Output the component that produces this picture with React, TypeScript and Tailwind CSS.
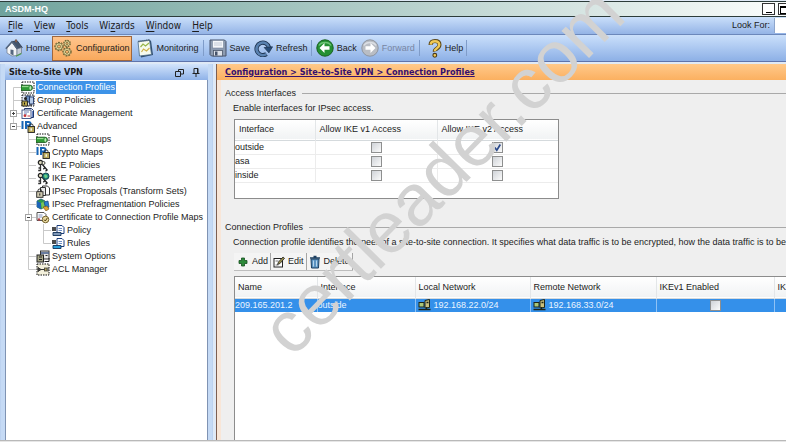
import React, { ReactNode } from "react";

type Guide = "none" | "line" | "tee" | "elbow" | "first" | "plus" | "minus";

interface TreeItem {
  label: string;
  icon: ReactNode;
  guides: Guide[];
  selected?: boolean;
}

/* ---------- tree icons ---------- */

const TunnelIcon = () => (
  <svg viewBox="0 0 14 13" className="h-[13px] w-[14px] shrink-0">
    <rect x="1" y="1" width="12" height="11" fill="#fff" stroke="#111" strokeDasharray="1.5 1" />
    <path d="M0 4.2h9q2.5 0 2.5 2.6T9 9.5H0z" fill="#2f9a35" stroke="#17521b" strokeWidth=".8" />
    <path d="M1 5.6h6.5" stroke="#a5e29a" />
    <ellipse cx="9.4" cy="6.9" rx="1" ry="1.9" fill="#bfe8b8" />
  </svg>
);

const GroupIcon = () => (
  <svg viewBox="0 0 14 13" className="h-[13px] w-[14px] shrink-0">
    <rect x="1" y="1" width="12" height="11" fill="#dfe6f2" stroke="#111" strokeDasharray="1.5 1" />
    <path d="M5 2h4v6H5z" fill="#6d8fc0" stroke="#1a2d57" strokeWidth=".8" />
    <path d="M8.5 3h4v7h-4z" fill="#b8cdea" stroke="#1f3668" strokeWidth=".9" />
    <circle cx="4.5" cy="4.5" r="1.5" fill="#222" />
    <rect x="1" y="7" width="5.5" height="5" fill="#b9a84c" stroke="#222" strokeWidth=".9" />
    <path d="M3.5 8.5v2M8 11h3" stroke="#111" />
  </svg>
);

const CertIcon = () => (
  <svg viewBox="0 0 14 13" className="h-[13px] w-[14px] shrink-0">
    <path d="M3.5 1.5h7l2 2v7h-9z" fill="#f4f7ff" stroke="#22386b" />
    <rect x="1" y="3" width="9" height="8.5" fill="#fff" stroke="#394d82" strokeWidth=".9" />
    <path d="M3 5h5M3 7h3" stroke="#6b7fb8" />
    <circle cx="4" cy="8.7" r="1.4" fill="#c7343a" />
    <path d="M6.5 9h2.5" stroke="#c7343a" />
    <path d="M11.5 4v6" stroke="#6a86c6" />
  </svg>
);

const IpIcon = () => (
  <svg viewBox="0 0 14 13" className="h-[13px] w-[14px] shrink-0">
    <path d="M1.5 1v8M5 9V2h2.5q2 0 2 1.8T7.5 5.6H5" fill="none" stroke="#1765b5" strokeWidth="2" />
    <path d="M8.5 7V5.5q0-1.5 1.8-1.5T12 5.5V7" fill="none" stroke="#333" />
    <rect x="7" y="6.5" width="6.5" height="6" fill="#b9a95a" stroke="#222" strokeWidth=".9" />
    <path d="M10.2 8.3v2.4" stroke="#fff" strokeWidth="1.3" />
  </svg>
);

const KeysIcon = ({ globe }: { globe?: boolean }) => (
  <svg viewBox="0 0 14 13" className="h-[13px] w-[14px] shrink-0">
    <circle cx="4.5" cy="3.5" r="2.2" fill="#ddd9bd" stroke="#222" strokeWidth="1.2" />
    <path d="M4.5 5.5v6.5M4.5 9h-2M4.5 11.5H2.2" stroke="#333" strokeWidth="1.3" />
    <path d="M6 5l5.5 6.5M9 8.5l-1.7 1.7M11 11l-1.5 1.2" stroke="#222" strokeWidth="1.3" />
    {globe ? (
      <>
        <circle cx="9.8" cy="4.2" r="3.2" fill="#1f8f86" stroke="#123a44" strokeWidth=".9" />
        <path d="M8 3.5q1.5-2 3 0t-2 2.5z" fill="#6fd07f" />
      </>
    ) : (
      <circle cx="7.5" cy="4" r="1.5" fill="#f5f2dc" stroke="#333" strokeWidth=".9" />
    )}
  </svg>
);

const ProposalIcon = () => (
  <svg viewBox="0 0 14 13" className="h-[13px] w-[14px] shrink-0">
    <path d="M6.5 1h5l2 2v7h-7z" fill="#fff" stroke="#333" />
    <path d="M4.5 2.5h5v8h-5z" fill="#e8e8e8" stroke="#333" />
    <path d="M2 7V5.5Q2 4 3.7 4t1.7 1.5V7" fill="none" stroke="#222" />
    <rect x=".7" y="6.7" width="6.3" height="5.6" fill="#cfc9b0" stroke="#222" strokeWidth=".9" />
    <path d="M3.8 8.4v2.2" stroke="#222" />
  </svg>
);

const FragIcon = () => (
  <svg viewBox="0 0 14 13" className="h-[13px] w-[14px] shrink-0">
    <path d="M1 3l4-2 4 2v6l-4 2-4-2z" fill="#2f9c48" stroke="#134f6b" strokeWidth=".8" />
    <path d="M1 3l4 2v6L1 9z" fill="#1c63b8" />
    <path d="M5 5l4-2 1 5-4 3z" fill="#79c65a" />
    <path d="M8 4l4-1 1 6-3 2z" fill="#2a7fd0" stroke="#123e7c" strokeWidth=".7" />
    <path d="M7 9l4-1 2 3-3 2z" fill="#e0a437" stroke="#6b4a10" strokeWidth=".6" />
  </svg>
);

const CertMapIcon = () => (
  <svg viewBox="0 0 14 13" className="h-[13px] w-[14px] shrink-0">
    <path d="M1 1.5h7l2 2v6H1z" fill="#fff" stroke="#555" />
    <path d="M2.5 4h4M2.5 6h4" stroke="#8092bd" />
    <circle cx="3" cy="8.5" r="1.3" fill="#b9434a" />
    <circle cx="9.5" cy="8.5" r="3.3" fill="#e9d9a0" stroke="#66531d" strokeWidth=".9" />
    <path d="M8 8.5l1.3 1.5L11.3 7" fill="none" stroke="#554210" />
  </svg>
);

const PolicyIcon = ({ blue }: { blue?: boolean }) => (
  <svg viewBox="0 0 14 13" className="h-[13px] w-[14px] shrink-0">
    <path d="M6 1.5h5l2 2v6H6z" fill="#fff" stroke="#1d3f7d" />
    <path d="M7.5 4.5H11M7.5 6.5H11" stroke="#6e8ec6" />
    <path d="M1 4h4M1 6h4" stroke="#111" strokeWidth="1.5" />
    <path d="M2 8.5h8v3H2z" fill={blue ? "#2aa0dc" : "#7e97b8"} stroke="#123158" strokeWidth=".9" />
  </svg>
);

const SystemIcon = () => (
  <svg viewBox="0 0 14 13" className="h-[13px] w-[14px] shrink-0">
    <rect x="4.5" y="1" width="8.5" height="8" fill="#e8e8e8" stroke="#333" />
    <path d="M5 3h8" stroke="#49618c" strokeWidth="1.6" />
    <rect x="1" y="5" width="6.5" height="7" fill="#a5a586" stroke="#222" />
    <path d="M3 7h3M3 9.5h3M8.5 11.5H13V8M9.5 5.5h2" fill="none" stroke="#222" />
  </svg>
);

const AclIcon = () => (
  <svg viewBox="0 0 14 13" className="h-[13px] w-[14px] shrink-0">
    <rect x="1" y="1" width="12" height="11" fill="#f4f1dc" stroke="#111" strokeDasharray="1.5 1" />
    <path d="M2 4.5l3 2-3 2zM12 4.5v4M5 6.5h4" fill="#444" stroke="#333" />
    <rect x="8.5" y="5" width="2.5" height="3" fill="#b8a85c" stroke="#333" strokeWidth=".7" />
  </svg>
);

/* ---------- toolbar icons ---------- */

const HomeIcon = () => (
  <svg viewBox="0 0 18 18" className="size-[18px]">
    <path d="M2 9l5-6 5 5v8.5l-5 .5-5-3z" fill="#f3f4f6" stroke="#6b7686" strokeWidth=".7" />
    <path d="M7 2.8l5-1.3 5.300 7L12 10z" fill="#43536b" stroke="#2b3749" strokeWidth=".8" />
    <path d="M12 10l4.5-1.5V14L12 16.5z" fill="#c5ccd7" stroke="#6b7686" strokeWidth=".7" />
    <path d="M.8 9.8L7 2.8l5.3 7" fill="none" stroke="#53647c" strokeWidth="1.5" />
    <path d="M5.5 10.5l3 .5v5.500l-3-1.5z" fill="#56677f" />
    <path d="M10 .5h2v3l-2-.5z" fill="#7c5a4a" />
    <path d="M11 17.2l5.5-2.7" stroke="#4f9a48" strokeWidth="1.2" />
  </svg>
);

const GearsIcon = () => (
  <svg viewBox="0 0 19 18" className="h-[18px] w-[19px]">
    <g fill="#efe3a6" stroke="#6d6030">
      <circle cx="5" cy="7.5" r="4" strokeWidth="1.4" strokeDasharray="1.8 1.1" />
      <circle cx="5" cy="7.5" r="3.4" strokeWidth=".7" />
      <circle cx="13" cy="4.5" r="3.2" strokeWidth="1.3" strokeDasharray="1.5 1" />
      <circle cx="13" cy="4.5" r="2.7" strokeWidth=".7" />
      <circle cx="13" cy="12.8" r="4" strokeWidth="1.4" strokeDasharray="1.8 1.1" />
      <circle cx="13" cy="12.8" r="3.4" strokeWidth=".7" />
    </g>
    <g fill="#fdb872" stroke="#6d6030" strokeWidth=".8">
      <circle cx="5" cy="7.5" r="1.6" />
      <circle cx="13" cy="4.5" r="1.1" />
      <circle cx="13" cy="12.8" r="1.6" />
    </g>
  </svg>
);

const MonitorIcon = () => (
  <svg viewBox="0 0 17 19" className="h-[19px] w-[17px]">
    <path d="M2 3l12-1.5L16 16 4 18.5z" fill="#2f4c6e" />
    <path d="M1 2.5L12.5 1l2 14.5L2.5 17z" fill="#f6faee" stroke="#4a6a86" strokeWidth=".8" />
    <path d="M3.5 8L6 5l2.500 2L12 4" fill="none" stroke="#97b54a" strokeWidth="1.2" />
    <path d="M4.5 13l2-3 3 2 3-3" fill="none" stroke="#d0b24e" strokeWidth="1.2" />
    <path d="M1.5 2.5L13 1" stroke="#30465f" strokeWidth="1.7" strokeDasharray="1 1" />
  </svg>
);

const SaveIcon = () => (
  <svg viewBox="0 0 18 18" className="size-[18px]">
    <path d="M1 1h14.5L17 2.5V17H2.5L1 15.500z" fill="#8d9cb1" stroke="#46536a" />
    <rect x="3.5" y="1.5" width="11" height="7.5" fill="#f5f7fa" stroke="#76849a" strokeWidth=".6" />
    <path d="M5 4h8M5 6h8" stroke="#c2cad6" />
    <rect x="4.5" y="11.5" width="9" height="5.5" fill="#dde2ea" stroke="#4c586c" strokeWidth=".8" />
    <rect x="6" y="12.5" width="2.5" height="4" fill="#46536a" />
  </svg>
);

const RefreshIcon = () => (
  <svg viewBox="0 0 19 18" className="h-[18px] w-[19px]">
    <path d="M12.5 15A6.3 6.3 0 1 1 15 8.5" fill="none" stroke="#1d3350" strokeWidth="4.2" />
    <path d="M12.5 15A6.3 6.3 0 1 1 15 8.5" fill="none" stroke="#5a82b0" strokeWidth="2.6" />
    <path d="M10.2 8.5l8.3-.7-3.600 6z" fill="#274c78" stroke="#1d3350" strokeWidth=".8" />
  </svg>
);

const ArrowIcon = ({ forward }: { forward?: boolean }) => (
  <svg viewBox="0 0 18 18" className="size-[18px]">
    <circle cx="9" cy="9" r="8.2" fill={forward ? "#b9bdc4" : "#249033"} stroke={forward ? "#8f959f" : "#17601f"} />
    <path d="M3 6.5a6.5 5 0 0 1 12 0" fill="none" stroke={forward ? "#dcdfe4" : "#6cc274"} strokeWidth="1.5" />
    <path
      d={forward ? "M14.5 9l-5-5v3.200h-5v3.600h5V14z" : "M3.5 9l5-5v3.200h5v3.600h-5V14z"}
      fill="#fff"
    />
  </svg>
);

const HelpIcon = () => (
  <svg viewBox="0 0 14 19" className="h-[19px] w-[14px]">
    <path d="M2.5 6Q2.5 2 7 2t4.5 3.8Q11.5 8 9 9.5t-2.200 3" fill="none" stroke="#5b4718" strokeWidth="4" />
    <path d="M2.7 5.7Q3 2.3 7 2.3t4.300 3.500Q11.300 7.800 9 9.300t-2.200 2.900" fill="none" stroke="#f0c957" strokeWidth="2.4" />
    <circle cx="6.8" cy="16.3" r="1.9" fill="#f0c957" stroke="#4a3b18" strokeWidth="1.1" />
  </svg>
);

const HostIcon = () => (
  <svg viewBox="0 0 13 12" className="h-3 w-[13px] shrink-0">
    <path d="M7 1.5l4.5-1v8L7 9z" fill="#c8bf7c" stroke="#1d2417" />
    <rect x="1" y="3.5" width="5" height="4.5" fill="#a9c77a" stroke="#1d2417" />
    <path d="M.5 10.5h5M5 10.5h7.5M8.5 8v3M8.5 3.5h2" stroke="#1d2417" strokeWidth="1.3" />
  </svg>
);

/* ---------- data ---------- */

const menus = ["File", "View", "Tools", "Wizards", "Window", "Help"];
const menuKeys: Record<string, number> = { Wizards: 2 };

const tree: TreeItem[] = [
  { label: "Connection Profiles", icon: <TunnelIcon />, guides: ["first"], selected: true },
  { label: "Group Policies", icon: <GroupIcon />, guides: ["tee"] },
  { label: "Certificate Management", icon: <CertIcon />, guides: ["plus"] },
  { label: "Advanced", icon: <IpIcon />, guides: ["minus"] },
  { label: "Tunnel Groups", icon: <TunnelIcon />, guides: ["none", "tee"] },
  { label: "Crypto Maps", icon: <IpIcon />, guides: ["none", "tee"] },
  { label: "IKE Policies", icon: <KeysIcon />, guides: ["none", "tee"] },
  { label: "IKE Parameters", icon: <KeysIcon globe />, guides: ["none", "tee"] },
  { label: "IPsec Proposals (Transform Sets)", icon: <ProposalIcon />, guides: ["none", "tee"] },
  { label: "IPsec Prefragmentation Policies", icon: <FragIcon />, guides: ["none", "tee"] },
  { label: "Certificate to Connection Profile Maps", icon: <CertMapIcon />, guides: ["none", "minus"] },
  { label: "Policy", icon: <PolicyIcon />, guides: ["none", "line", "tee"] },
  { label: "Rules", icon: <PolicyIcon blue />, guides: ["none", "line", "elbow"] },
  { label: "System Options", icon: <SystemIcon />, guides: ["none", "tee"] },
  { label: "ACL Manager", icon: <AclIcon />, guides: ["none", "elbow"] },
];

const interfaces = [
  { name: "outside", v1: false, v2: true },
  { name: "asa", v1: false, v2: false },
  { name: "inside", v1: false, v2: false },
];

/* ---------- parts ---------- */

const guidePaths: Record<Guide, string> = {
  none: "",
  line: "M7.5 0v13",
  tee: "M7.5 0v13M7.5 6.5H15",
  elbow: "M7.5 0v6.5H15",
  first: "M7.5 13V6.5H15",
  plus: "M7.5 0v13M7.5 6.5H15",
  minus: "M7.5 0v6.5H15",
};

function GuideCell({ type, last }: { type: Guide; last?: boolean }) {
  const box = type === "plus" || type === "minus";
  const svg = (
    <svg viewBox="0 0 15 13" className="h-[13px] w-[15px]">
      <path d={type === "minus" && !last ? guidePaths.tee : guidePaths[type]} fill="none" stroke="#c9c9c9" />
      {box && <rect x="4.5" y="3.5" width="6" height="6" fill="#fff" stroke="#a3a3a3" />}
      {box && <path d={type === "plus" ? "M6 6.5h3M7.5 5v3" : "M6 6.5h3"} stroke="#444" />}
    </svg>
  );
  if (box) {
    return <button aria-label={type === "plus" ? "Expand" : "Collapse"}>{svg}</button>;
  }
  return svg;
}

function CheckBox({ label, checked }: { label: string; checked?: boolean }) {
  return (
    <span className="mx-auto grid size-[11px]">
      <input
        type="checkbox"
        aria-label={label}
        defaultChecked={checked}
        className="peer col-start-1 row-start-1 block size-[11px] appearance-none border border-[#8e8f8f] bg-linear-to-br from-[#cfd3d8] to-[#fbfbfb]"
      />
      <svg viewBox="0 0 11 11" className="pointer-events-none invisible col-start-1 row-start-1 size-[11px] peer-checked:visible">
        <path d="M2.8 5.5l2 2.700L8.300 2.500" fill="none" stroke="#2b4a8b" strokeWidth="1.7" />
      </svg>
    </span>
  );
}

function GroupTitle({ children }: { children: ReactNode }) {
  return (
    <div className="flex items-center gap-[6px] pl-2">
      <h2>{children}</h2>
      <div className="flex-1 border-t border-[#a9a9a9]" />
    </div>
  );
}

function ToolButton({ icon, label, className = "" }: { icon: ReactNode; label: string; className?: string }) {
  return (
    <button className={`flex items-center gap-[3px] ${className}`}>
      {icon}
      <span>{label}</span>
    </button>
  );
}

const Separator = () => <div className="h-4 w-px bg-[#7f9cc9]" />;

export default function App() {
  return (
    <div className="relative flex h-screen w-full flex-col overflow-hidden bg-[#dfe9f6] font-['Liberation_Sans',Arial,sans-serif] text-[9px] leading-[13px] text-[#1c1c1c]">
      {/* Title bar */}
      <header className="mt-px flex h-4 shrink-0 items-center border-y border-[#2c3c3a] bg-linear-to-r from-[#6fa39d] via-[#b4cfcb] to-[#fbfdfc] pl-[5px]">
        <h1 className="flex-1 text-[9px] font-bold text-white">ASDM-HQ</h1>
        <div className="flex gap-[3px]">
          <button aria-label="Minimize" className="flex h-3 w-[13px] items-end justify-center border border-[#333] bg-white pb-px">
            <span className="h-px w-[6px] bg-black" />
          </button>
          <button aria-label="Maximize" className="h-3 w-2 border border-r-0 border-[#333] bg-white pt-px pl-px">
            <span className="block h-2 border border-t-2 border-r-0 border-black" />
          </button>
        </div>
      </header>

      {/* Menu bar */}
      <nav className="flex h-[18px] shrink-0 items-center border-b border-[#6c88bb] bg-linear-to-b from-[#cadffa] to-[#94b4e6] pl-2">
        <div className="flex flex-1 gap-[11px] font-['DejaVu_Sans_Condensed',sans-serif] text-[10px]">
          {menus.map((m) => {
            const k = menuKeys[m] ?? 0;
            return (
              <button key={m}>
                {m.slice(0, k)}
                <span className="underline underline-offset-2">{m[k]}</span>
                {m.slice(k + 1)}
              </button>
            );
          })}
        </div>
        <label htmlFor="look" className="pr-1">Look For:</label>
        <input id="look" className="h-[15px] w-3 border-l border-[#8ea6cc] bg-white" />
      </nav>

      {/* Toolbar */}
      <div className="flex h-[27px] shrink-0 items-center border-b border-[#5f74ab] bg-linear-to-b from-[#cbe0fb] to-[#8db0e6] pl-[5px]">
        <ToolButton icon={<HomeIcon />} label="Home" />
        <ToolButton
          icon={<GearsIcon />}
          label="Configuration"
          className="ml-[2px] h-[25px] border border-[#a0673d] bg-linear-to-b from-[#ffc48c] to-[#f9a95c] px-px"
        />
        <ToolButton icon={<MonitorIcon />} label="Monitoring" className="mr-1 ml-[5px]" />
        <Separator />
        <ToolButton icon={<SaveIcon />} label="Save" className="ml-[5px]" />
        <ToolButton icon={<RefreshIcon />} label="Refresh" className="mr-[3px] ml-1" />
        <Separator />
        <ToolButton icon={<ArrowIcon />} label="Back" className="mx-1" />
        <ToolButton icon={<ArrowIcon forward />} label="Forward" className="mr-1 text-[#7886a3]" />
        <Separator />
        <ToolButton icon={<HelpIcon />} label="Help" className="mr-[3px] ml-2" />
        <Separator />
      </div>

      <div className="flex min-h-0 flex-1 pt-[2px]">
        {/* Sidebar */}
        <aside className="flex w-[213px] shrink-0 flex-col border-x border-[#bcd2f0] bg-[#c5daf5] pr-1 pl-1">
          <div className="flex h-4 shrink-0 items-center bg-linear-to-b from-[#d3e4fb] to-[#8fb2e8] px-1">
            <h2 className="flex-1 font-['DejaVu_Sans_Condensed',sans-serif] font-bold">Site-to-Site VPN</h2>
            <button aria-label="Float panel" className="mr-2">
              <svg viewBox="0 0 9 9" className="size-[9px]">
                <path d="M3.5 3V1.5h5V6H6M.5 3.5h5v5h-5z" fill="none" stroke="#222" />
              </svg>
            </button>
            <button aria-label="Pin panel" className="mr-1">
              <svg viewBox="0 0 8 9" className="h-[9px] w-2">
                <path d="M2 5V.5h4V5M.5 5.5h7M4 5.500V9M5.500 1v4" fill="none" stroke="#222" />
              </svg>
            </button>
          </div>
          <ul className="flex-1 border-x border-[#7f93b3] bg-white pt-px">
            {tree.map((item) => (
              <li key={item.label} className="flex h-[13px] items-center">
                {item.guides.map((g, i) => (
                  <GuideCell key={i} type={g} last={item.label === "Advanced"} />
                ))}
                {item.icon}
                <a
                  href="#"
                  className={item.selected ? "ml-px bg-[#3d93e8] px-px whitespace-nowrap text-white" : "ml-px px-px whitespace-nowrap"}
                >
                  {item.label}
                </a>
              </li>
            ))}
          </ul>
        </aside>

        {/* Main panel */}
        <main className="ml-[3px] flex min-w-0 flex-1 flex-col overflow-hidden border-l border-[#7d5f52] bg-[#efefef]">
          <div className="flex h-4 shrink-0 items-center bg-linear-to-b from-[#ffc98a] to-[#fbb060] pl-2 font-['DejaVu_Sans_Condensed',sans-serif] font-bold">
            <a href="#" className="text-[#35106e] underline">Configuration &gt; Site-to-Site VPN &gt; Connection Profiles</a>
          </div>
          <div className="flex min-h-0 flex-1 flex-col border-l-4 border-[#f8e6d8] pt-[7px]">
            <section className="-ml-1">
              <GroupTitle>Access Interfaces</GroupTitle>
              <p className="mt-[2px] pl-4">Enable interfaces for IPsec access.</p>
              <div className="mt-1 ml-[17px] h-20 w-[325px] border border-[#8c8c8c] bg-white">
                <table className="w-full table-fixed border-collapse">
                  <colgroup>
                    <col className="w-20" />
                    <col className="w-[122px]" />
                    <col />
                  </colgroup>
                  <thead>
                    <tr className="h-5 border-b border-[#d5dadd] bg-linear-to-b from-white to-[#f1f3f4] text-left">
                      <th className="border-r border-[#e3e6e8] pl-1 font-normal">Interface</th>
                      <th className="border-r border-[#e3e6e8] pl-1 font-normal">Allow IKE v1 Access</th>
                      <th className="pl-1 font-normal">Allow IKE v2 Access</th>
                    </tr>
                  </thead>
                  <tbody>
                    {interfaces.map((row) => (
                      <tr key={row.name} className="h-[14px] border-b border-[#ececec]">
                        <td className="border-r border-[#ececec] p-0">{row.name}</td>
                        <td className="border-r border-[#ececec] p-0">
                          <CheckBox label={`${row.name} IKE v1`} checked={row.v1} />
                        </td>
                        <td className="p-0">
                          <CheckBox label={`${row.name} IKE v2`} checked={row.v2} />
                        </td>
                      </tr>
                    ))}
                  </tbody>
                </table>
              </div>
            </section>

            <section className="mt-[22px] -ml-1 flex min-h-0 flex-1 flex-col">
              <GroupTitle>Connection Profiles</GroupTitle>
              <p className="mt-[2px] pl-4 whitespace-nowrap">
                Connection profile identifies the peer of a site-to-site connection. It specifies what data traffic is to be encrypted, how the data traffic is to be
              </p>
              <div className="mt-1 ml-[17px] flex h-[18px] self-start border-b border-[#bdbdbd] bg-[#f4f4f4]">
                <button className="flex items-center gap-1 border-r border-[#a5a5a5] pr-[2px] pl-1">
                  <svg viewBox="0 0 10 10" className="size-[10px]">
                    <path d="M3.5 1h3v2.500H9v3H6.500V9h-3V6.500H1v-3h2.500z" fill="#2c8a3a" stroke="#174f20" strokeWidth=".8" />
                  </svg>
                  Add
                </button>
                <button className="flex items-center gap-[3px] border-r border-[#a5a5a5] px-[2px]">
                  <svg viewBox="0 0 12 12" className="size-3">
                    <rect x="1" y="2.5" width="8.5" height="8.5" fill="#fff" stroke="#222" />
                    <path d="M2.5 5h3M2.500 9h3" stroke="#777" />
                    <path d="M4.5 8.5l1-2.500L10 1l1.500 1.300L7 7.500z" fill="#9a8f4a" stroke="#222" strokeWidth=".8" />
                  </svg>
                  Edit
                </button>
                <button className="flex items-center gap-[3px] border-r border-[#a5a5a5] px-[2px]">
                  <svg viewBox="0 0 12 14" className="h-[14px] w-3">
                    <path d="M2 4h8l-.5 9h-7z" fill="#5b92c0" stroke="#1d3f60" />
                    <path d="M4.5 5.5v6M7.5 5.5v6" stroke="#b5d4ec" />
                    <path d="M1 3h10M4.5 1.5h3" stroke="#1d3f60" strokeWidth="1.6" />
                  </svg>
                  Delete
                </button>
              </div>
              <div className="mt-[5px] ml-[17px] min-h-0 flex-1 border-t border-l border-[#8c8c8c] bg-white">
                <table className="w-full table-fixed border-collapse">
                  <colgroup>
                    <col className="w-[82px]" />
                    <col className="w-[98px]" />
                    <col className="w-[115px]" />
                    <col className="w-[126px]" />
                    <col className="w-[118px]" />
                    <col />
                  </colgroup>
                  <thead>
                    <tr className="h-[21px] border-b border-[#d5dadd] bg-linear-to-b from-white to-[#f1f3f4] text-left">
                      {["Name", "Interface", "Local Network", "Remote Network", "IKEv1 Enabled", "IK"].map((h) => (
                        <th key={h} className="border-r border-[#e3e6e8] pl-[3px] font-normal last:border-r-0">{h}</th>
                      ))}
                    </tr>
                  </thead>
                  <tbody>
                    <tr className="h-[14px] bg-[#3490ea] text-[#eaf4ff]">
                      <td className="border-r border-[#8fc2f5] p-0">209.165.201.2</td>
                      <td className="border-r border-[#8fc2f5] p-0">outside</td>
                      <td className="border-r border-[#8fc2f5] p-0">
                        <span className="flex items-center gap-[3px] pl-[2px]"><HostIcon />192.168.22.0/24</span>
                      </td>
                      <td className="border-r border-[#8fc2f5] p-0">
                        <span className="flex items-center gap-[3px] pl-[2px]"><HostIcon />192.168.33.0/24</span>
                      </td>
                      <td className="border-r border-[#8fc2f5] p-0">
                        <CheckBox label="IKEv1 enabled" />
                      </td>
                      <td className="p-0" />
                    </tr>
                  </tbody>
                </table>
              </div>
            </section>
          </div>
        </main>
      </div>
      <footer className="h-[2px] shrink-0 border-t border-[#b9b9b9] bg-[#e6e6e6]" />

      {/* Watermark over the whole window */}
      <svg viewBox="0 0 786 442" className="pointer-events-none absolute inset-0 size-full">
        <text transform="translate(292 359) rotate(-45.4)" fill="#d2d2d2" className="text-[73px]">
          certleader.com
        </text>
      </svg>
    </div>
  );
}
